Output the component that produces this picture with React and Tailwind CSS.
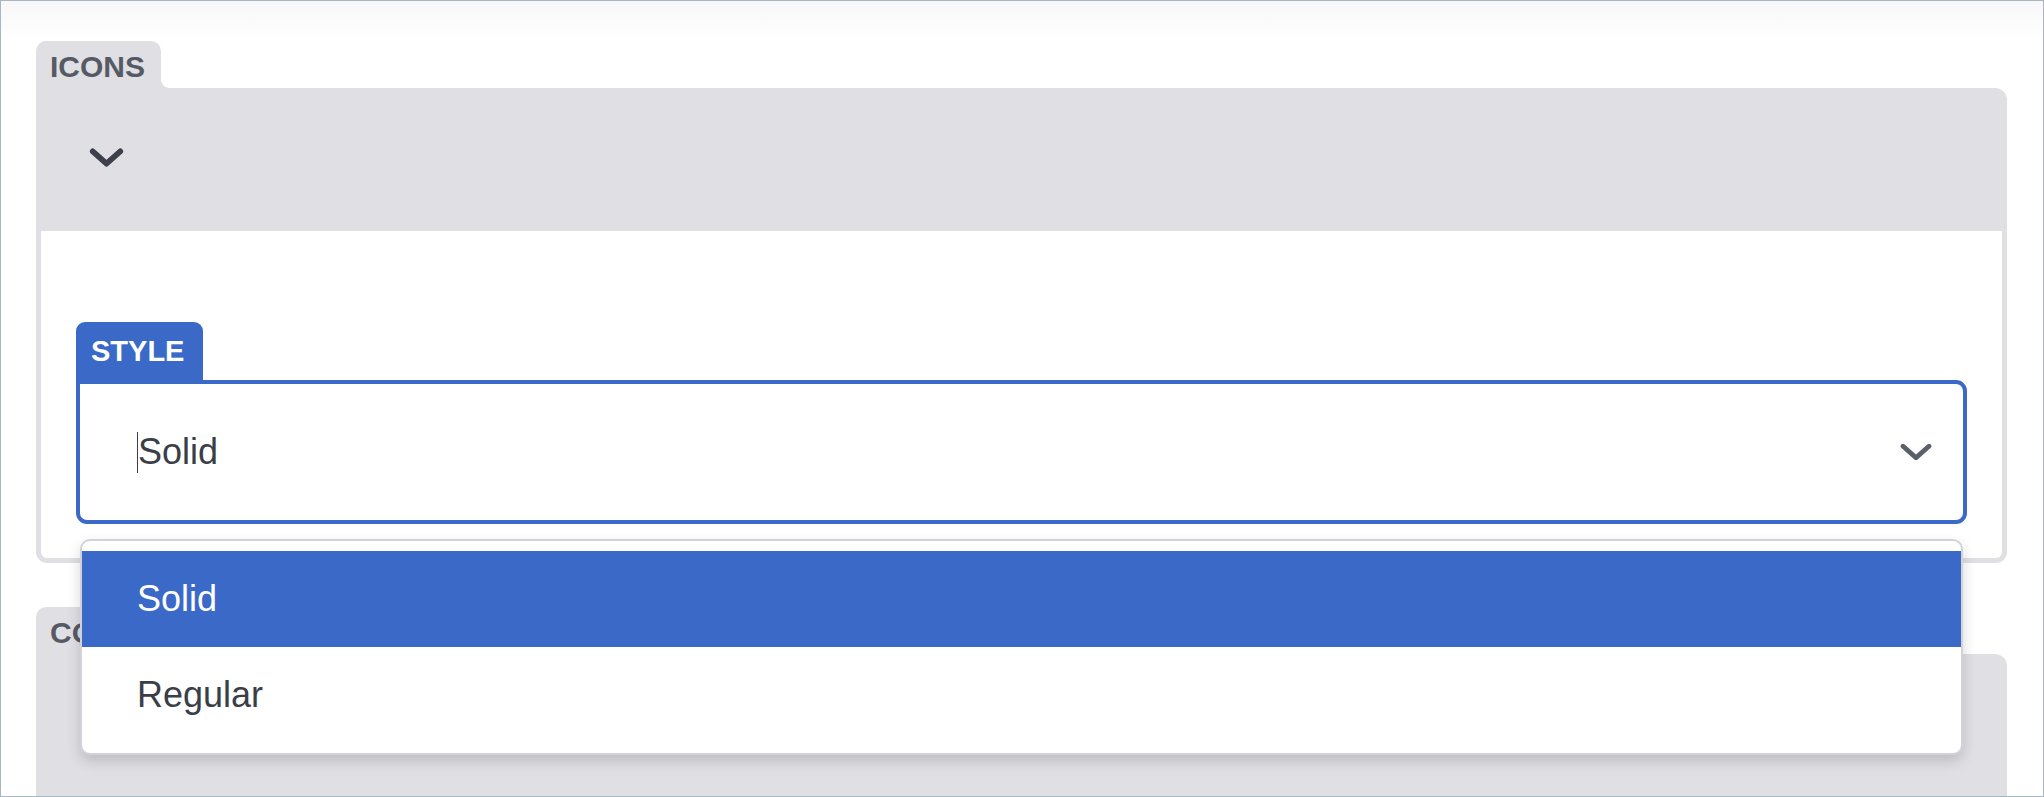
import { useState } from 'react'

const FONT = { fontFamily: '"Liberation Sans", Arial, sans-serif' }

function Chevron({ className = '', color = '#3c404b', width = 5.5 }) {
    return (
        <svg className={className} viewBox="0 0 36 20" fill="none">
            <polyline
                points="3.5,3.5 18,16.5 32.5,3.5"
                stroke={color}
                strokeWidth={width}
                strokeLinecap="round"
                strokeLinejoin="round"
            />
        </svg>
    )
}

function Tab({ children, width }) {
    return (
        <div className="flex items-end">
            <div
                className={`h-[47px] ${width} rounded-t-[10px] bg-[#e0dfe4] pl-[14px] pt-[11px] text-[30px] font-bold leading-[30px] text-[#555a64]`}
            >
                {children}
            </div>
            {/* inverted corner where the tab meets the panel */}
            <div className="h-[8px] w-[8px] bg-[radial-gradient(circle_at_100%_0,transparent_7.5px,#e0dfe4_8px)]" />
        </div>
    )
}

const OPTIONS = ['Solid', 'Regular']

function StyleSelect() {
    const [value, setValue] = useState('Solid')
    return (
        <div className="relative">
            <div className="flex h-[58px] w-[127px] items-start rounded-t-[9px] bg-[#3b69c7] pl-[15px] pt-[15px] text-[29px] font-bold leading-[29px] text-white">
                STYLE
            </div>
            <div className="flex h-[144px] items-center rounded-[11px] rounded-tl-none border-4 border-[#3b69c7] bg-white pl-[57px] pr-[31px]">
                <span className="h-[41px] w-px bg-[#3a3e48]" />
                <span className="flex-1 text-[36px] leading-none text-[#3a3e48]">{value}</span>
                <Chevron className="h-[18px] w-[32px]" color="#5b5f69" />
            </div>
            <div className="absolute left-[4px] right-[4px] top-full z-10 mt-[15px] rounded-[10px] border-2 border-[#d3d2d8] bg-white py-[10px] shadow-[0_6px_14px_rgba(0,0,0,0.16)]">
                {OPTIONS.map((opt) => (
                    <div
                        key={opt}
                        onClick={() => setValue(opt)}
                        className={`flex h-[96px] items-center pl-[55px] text-[36px] leading-none ${
                            opt === value ? 'bg-[#3b69c7] text-white' : 'text-[#3a3e48]'
                        }`}
                    >
                        {opt}
                    </div>
                ))}
            </div>
        </div>
    )
}

export default function App() {
    return (
        <div
            className="flex h-[797px] w-[2044px] flex-col overflow-hidden border border-[#a9b5c1] bg-white"
            style={FONT}
        >
            <div className="h-[40px] shrink-0 bg-gradient-to-b from-[#f7f7f9] to-white" />
            <div className="flex flex-1 flex-col pl-[35px] pr-[36px]">
                {/* ICONS */}
                <Tab width="w-[125px]">ICONS</Tab>
                <div className="h-[143px] rounded-tr-[12px] bg-[#e0dfe4] pl-[53px] pt-[60px]">
                    <Chevron className="h-[19px] w-[35px]" width={6} />
                </div>
                <div className="rounded-b-[11px] border-x-[5px] border-b-[5px] border-[#e0dfe4] bg-white px-[35px] pb-[34px] pt-[91px]">
                    <StyleSelect />
                </div>

                {/* COLOR */}
                <div className="mt-[44px] flex flex-1 flex-col">
                    <Tab width="w-[130px]">COLOR</Tab>
                    <div className="flex-1 rounded-tr-[12px] bg-[#e0dfe4]" />
                </div>
            </div>
        </div>
    )
}
